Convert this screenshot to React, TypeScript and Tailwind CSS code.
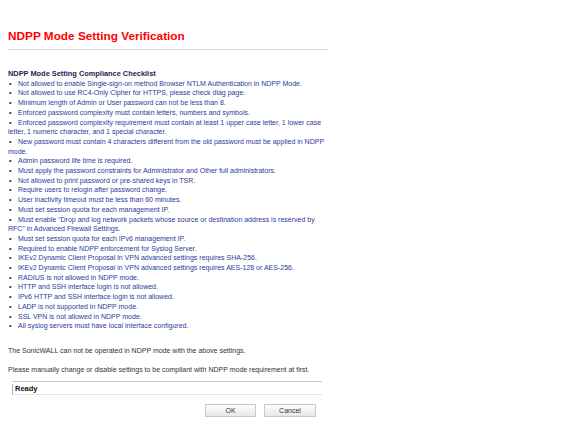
import React from "react";

const items: string[] = [
  "Not allowed to enable Single-sign-on method Browser NTLM Authentication in NDPP Mode.",
  "Not allowed to use RC4-Only Cipher for HTTPS, please check diag page.",
  "Minimum length of Admin or User password can not be less than 8.",
  "Enforced password complexity must contain letters, numbers and symbols.",
  "Enforced password complexity requirement must contain at least 1 upper case letter, 1 lower case letter, 1 numeric character, and 1 special character.",
  "New password must contain 4 characters different from the old password must be applied in NDPP mode.",
  "Admin password life time is required.",
  "Must apply the password constraints for Administrator and Other full administrators.",
  "Not allowed to print password or pre-shared keys in TSR.",
  "Require users to relogin after password change.",
  "User inactivity timeout must be less than 60 minutes.",
  "Must set session quota for each management IP.",
  "Must enable \"Drop and log network packets whose source or destination address is reserved by RFC\" in Advanced Firewall Settings.",
  "Must set session quota for each IPv6 management IP.",
  "Required to enable NDPP enforcement for Syslog Server.",
  "IKEv2 Dynamic Client Proposal in VPN advanced settings requires SHA-256.",
  "IKEv2 Dynamic Client Proposal in VPN advanced settings requires AES-128 or AES-256.",
  "RADIUS is not allowed in NDPP mode.",
  "HTTP and SSH interface login is not allowed.",
  "IPv6 HTTP and SSH interface login is not allowed.",
  "LADP is not supported in NDPP mode.",
  "SSL VPN is not allowed in NDPP mode.",
  "All syslog servers must have local interface configured.",
];

export default function App() {
  return (
    <div
      className="w-[576px] h-[445px] bg-white overflow-hidden"
      style={{ fontFamily: "Tahoma, 'Liberation Sans', Arial, sans-serif" }}
    >
      <div className="pl-[8px] pt-[28px] w-[330px]">
        <h1 className="text-[11.8px] leading-[16px] font-bold text-[#ff0000]">
          NDPP Mode Setting Verification
        </h1>
        <div className="mt-[5px] h-px bg-[#dcdcdc] w-[320px]" />

        <div className="mt-[19px] text-[7px] leading-[9.7px]">
          <div className="font-bold text-[7.4px] text-[#1a1f4d]">NDPP Mode Setting Compliance Checklist</div>
          <ul className="text-[#2b3a9c]">
            {items.map((t, i) => (
              <li key={i} className="pr-[4px]">
                <span className="inline-block w-[10px] pl-[1px] text-[#222]">•</span>
                {t}
              </li>
            ))}
          </ul>
        </div>

        <div className="mt-[15px] text-[7px] leading-[9.7px] text-[#333]">
          <p>The SonicWALL can not be operated in NDPP mode with the above settings.</p>
          <p className="mt-[9px]">
            Please manually change or disable settings to be compliant with NDPP mode requirement at first.
          </p>
        </div>

        <div className="ml-[4px] mt-[7px] w-[310px] border-t border-[#c8c8c8]" />
        <div className="ml-[4px] mt-[2px] w-[310px] h-[11px] border-l border-b border-[#e4e4e4] border-l-[#b0b0b0] pl-[2px] text-[7.5px] leading-[10px] font-bold text-[#111]">
          Ready
        </div>

        <div className="mt-[9px] w-[308px] flex justify-end gap-[8px]">
          <button className="w-[51px] h-[13px] border border-[#c8c8c8] bg-gradient-to-b from-white to-[#e6e6e6] text-[7px] leading-[11px] text-[#333]">
            OK
          </button>
          <button className="w-[52px] h-[13px] border border-[#c8c8c8] bg-gradient-to-b from-white to-[#e6e6e6] text-[7px] leading-[11px] text-[#333]">
            Cancel
          </button>
        </div>
      </div>
    </div>
  );
}
